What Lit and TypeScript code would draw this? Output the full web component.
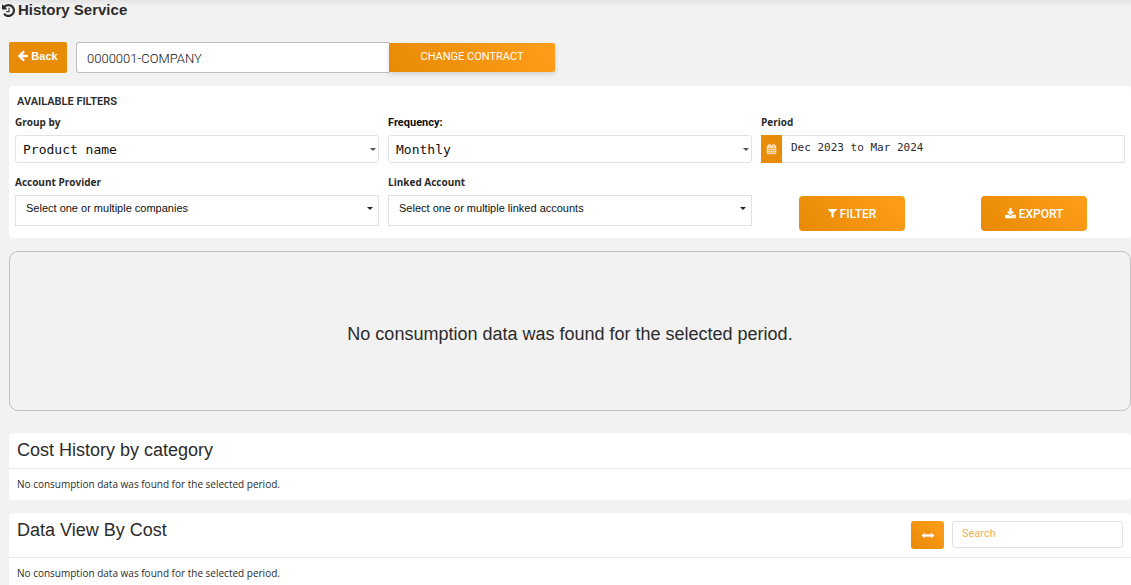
import { LitElement, html, css, svg } from "lit";
import { customElement, property } from "lit/decorators.js";

const icons = {
  history: { box: "0 0 1536 1536", d: "M1536 768q0 156-61 298t-164 245-245 164-298 61q-172 0-327-72.500t-264-204.500q-7-10-6.500-22.500t8.500-20.500l137-138q10-9 25-9 16 2 23 12 73 95 179 147t225 52q104 0 198.500-40.500t163.500-109.500 109.500-163.500 40.500-198.500-40.500-198.500-109.500-163.500-163.500-109.500-198.500-40.500q-98 0-188 35.500t-160 101.500l137 138q31 30 14 69-17 40-59 40h-448q-26 0-45-19t-19-45v-448q0-42 40-59 39-17 69 14l130 129q107-101 244.500-156.500t284.500-55.500q156 0 298 61t245 164 164 245 61 298zM896 480v448q0 14-9 23t-23 9h-320q-14 0-23-9t-9-23v-64q0-14 9-23t23-9h224v-352q0-14 9-23t23-9h64q14 0 23 9t9 23z" },
  back: { box: "0 0 1472 1408", d: "M1472 640v128q0 53-32.500 90.500t-84.500 37.500h-704l293 294q38 36 38 90t-38 90l-75 76q-37 37-90 37-52 0-91-37l-651-652q-37-37-37-90 0-52 37-91l651-650q38-38 91-38 52 0 90 38l75 74q38 38 38 91t-38 91l-293 293h704q52 0 84.500 37.500t32.500 90.500z" },
  filter: { box: "0 0 1410 1408", d: "M1404 39q17 41-14 70l-493 493v742q0 42-39 59-13 5-25 5-27 0-45-19l-256-256q-19-19-19-45v-486l-493-493q-31-29-14-70 17-39 59-39h1280q42 0 59 39z" },
  download: { box: "0 0 1664 1536", d: "M1280 1216q0-26-19-45t-45-19-45 19-19 45 19 45 45 19 45-19 19-45zM1536 1216q0-26-19-45t-45-19-45 19-19 45 19 45 45 19 45-19 19-45zM1664 992v320q0 40-28 68t-68 28h-1472q-40 0-68-28t-28-68v-320q0-40 28-68t68-28h465l135 136q58 56 136 56t136-56l136-136h464q40 0 68 28t28 68zM1339 423q17 41-14 70l-448 448q-18 19-45 19t-45-19l-448-448q-31-29-14-70 17-39 59-39h256v-448q0-26 19-45t45-19h256q26 0 45 19t19 45v448h256q42 0 59 39z" },
  calendar: { box: "0 0 1664 1792", d: "M128 1664h288v-288h-288v288zM480 1664h320v-288h-320v288zM128 1312h288v-320h-288v320zM480 1312h320v-320h-320v320zM128 928h288v-288h-288v288zM864 1664h320v-288h-320v288zM480 928h320v-288h-320v288zM1248 1664h288v-288h-288v288zM864 1312h320v-320h-320v320zM512 448v-288q0-13-9.500-22.500t-22.500-9.500h-64q-13 0-22.500 9.500t-9.500 22.500v288q0 13 9.500 22.500t22.500 9.500h64q13 0 22.500-9.500t9.500-22.500zM1248 1312h288v-320h-288v320zM864 928h320v-288h-320v288zM1248 928h288v-288h-288v288zM1280 448v-288q0-13-9.500-22.500t-22.500-9.500h-64q-13 0-22.500 9.500t-9.500 22.500v288q0 13 9.500 22.500t22.500 9.500h64q13 0 22.500-9.500t9.500-22.500zM1664 384v1280q0 52-38 90t-90 38h-1408q-52 0-90-38t-38-90v-1280q0-52 38-90t90-38h128v-96q0-66 47-113t113-47h64q66 0 113 47t47 113v96h384v-96q0-66 47-113t113-47h64q66 0 113 47t47 113v96h128q52 0 90 38t38 90z" },
  resize: { box: "0 0 1792 768", d: "M1792 384q0 26-19 45l-256 256q-19 19-45 19t-45-19-19-45v-128h-1024v128q0 26-19 45t-45 19-45-19l-256-256q-19-19-19-45t19-45l256-256q19-19 45-19t45 19 19 45v128h1024v-128q0-26 19-45t45-19 45 19l256 256q19 19 19 45z" },
};

@customElement("app-icon")
class AppIcon extends LitElement {
  static styles = css`
    :host { display: inline-flex; flex: none; }
    .glyph { width: 100%; height: 100%; fill: currentColor; stroke: currentColor; overflow: visible; }
    .thin { stroke-width: 0; }
    .thick { stroke-width: 110; }
  `;
  @property() name: keyof typeof icons = "history";
  render() {
    const icon = icons[this.name];
    const heavy = this.name === "resize" || this.name === "calendar";
    return html`<svg class="glyph ${heavy ? "thick" : "thin"}" viewBox=${icon.box} aria-hidden="true">${svg`<path d=${icon.d}></path>`}</svg>`;
  }
}

@customElement("app-root")
class AppRoot extends LitElement {
  static styles = css`
    :host {
      display: block;
      min-height: 100vh;
      box-sizing: border-box;
      padding-left: 9px;
      background: linear-gradient(#e4e4e4, #f2f2f2 6px) no-repeat #f2f2f2;
      color: #2b2b2b;
      font: 10px/16px "Liberation Sans", Arial, sans-serif;
      overflow: hidden;
    }
    *, *::before { box-sizing: border-box; }
    button, input, select { font: inherit; color: inherit; margin: 0; }
    h1, h2, p { margin: 0; font-weight: 400; }

    .title {
      display: flex;
      align-items: center;
      gap: 3px;
      margin-left: -7px;
      height: 20px;
      font-size: 15px;
      font-weight: 700;
    }
    .title-icon { width: 13px; height: 13px; }

    .toolbar { display: flex; align-items: center; margin: 22px 0 13px; }
    .back {
      display: flex;
      align-items: center;
      justify-content: center;
      gap: 3px;
      width: 58px;
      height: 31px;
      margin-right: 9px;
      padding: 0 0 3px;
      border: 0;
      border-radius: 2px;
      background: #e88b07;
      color: #fff;
      font-size: 11px;
      font-weight: 700;
      text-decoration: none;
    }
    .back-icon { width: 10px; height: 10px; }
    .contract {
      width: 313px;
      height: 31px;
      padding: 2px 10px 0;
      border: 1px solid #bfbfbf;
      border-right: 0;
      border-radius: 3px 0 0 3px;
      background: #fff;
      font: 300 13px Roboto, sans-serif;
      color: #111;
    }
    .orange {
      display: flex;
      align-items: center;
      justify-content: center;
      border: 0;
      background: linear-gradient(45deg, #e88a05, #ff9e1b);
      color: #fff;
    }
    .change {
      width: 166px;
      height: 29px;
      padding: 0 0 2px;
      border-radius: 0 2px 2px 0;
      font: 11px Roboto, sans-serif;
      box-shadow: 0 2px 5px rgb(0 0 0 / 14%);
    }

    .card { border-radius: 4px; background: #fff; }
    .filters { padding: 8px 6px 7px; }
    .legend { padding-left: 2px; font: 600 11px/16px Roboto, sans-serif; }
    .grid {
      display: grid;
      grid-template-columns: repeat(3, minmax(0, 1fr));
      column-gap: 9px;
      row-gap: 11px;
      padding-top: 4px;
    }
    .field { display: flex; flex-direction: column; }
    .label { margin-bottom: 4px; font: 700 10px/17px "Open Sans", sans-serif; }
    .label-plain { font: 700 11px/17px Roboto, sans-serif; color: #111; }
    .picker { display: grid; align-items: center; }
    .picker > * { grid-area: 1 / 1; }
    .caret {
      justify-self: end;
      margin-right: 3px;
      border: 3px solid transparent;
      border-top-color: #555;
      border-bottom: 0;
      pointer-events: none;
    }
    .caret-dark { margin: 0 6px 4px 0; border-top-color: #222; }
    .select {
      width: 100%;
      height: 28px;
      padding: 0 7px;
      appearance: none;
      border: 1px solid #e2e2e2;
      border-radius: 3px;
      background: #fff;
      font: 13px "DejaVu Sans Mono", monospace;
      color: #111;
    }
    .multi {
      height: 31px;
      padding: 0 10px 6px;
      border-radius: 0;
      font: 11px "Liberation Sans", Arial, sans-serif;
    }
    .period { display: flex; }
    .calendar {
      display: flex;
      align-items: center;
      justify-content: center;
      width: 21px;
      height: 28px;
      background: #e88b07;
      color: #fbe3c3;
    }
    .calendar-icon { width: 9px; height: 10px; }
    .date {
      flex: 1;
      min-width: 0;
      height: 28px;
      padding: 0 9px 4px;
      border: 1px solid #e2e2e2;
      border-left: 0;
      border-radius: 0;
      font: 11px "DejaVu Sans Mono", monospace;
    }
    .actions {
      display: grid;
      grid-template-columns: 1fr 1fr;
      justify-items: center;
      height: 35px;
      margin-top: 22px;
    }
    .action {
      gap: 3px;
      width: 106px;
      height: 35px;
      border-radius: 4px;
      font: 500 12px Roboto, sans-serif;
    }
    .filter-icon { width: 9px; height: 9px; }
    .download-icon { width: 11px; height: 10px; }

    .empty {
      display: flex;
      align-items: center;
      justify-content: center;
      min-height: 160px;
      margin: 13px 0 22px;
      padding: 12px 12px 6px;
      border: 1px solid #c0c0c0;
      border-radius: 9px;
      font-size: 18px;
      line-height: 24px;
    }
    .head {
      display: flex;
      gap: 8px;
      padding: 5px 8px 6px;
      border-bottom: 1px solid #e8e8e8;
    }
    .heading { flex: 1; font-size: 18px; line-height: 24px; }
    .note { padding: 7px 8px 8px; font: 10px/16px "Open Sans", sans-serif; }
    .data { margin-top: 13px; }
    .head-tools { padding: 8px 8px 8px; }
    .head-tools .heading { line-height: 18px; }
    .resize { width: 33px; height: 28px; padding: 0; border-radius: 3px; }
    .resize-icon { width: 12px; height: 5px; }
    .search {
      width: 171px;
      height: 27px;
      padding: 0 9px 2px;
      border: 1px solid #e2e2e2;
      border-radius: 3px;
      font: 11px Roboto, sans-serif;
    }
    .search::placeholder { color: #f0b05a; opacity: 1; }
  `;

  render() {
    const message = "No consumption data was found for the selected period.";
    return html`
      <h1 class="title"><app-icon class="title-icon" name="history"></app-icon>History Service</h1>
      <div class="toolbar">
        <a class="back" href="#"><app-icon class="back-icon" name="back"></app-icon>Back</a>
        <input class="contract" aria-label="Contract" .value=${"0000001-COMPANY"} />
        <button class="orange change">CHANGE CONTRACT</button>
      </div>

      <form class="card filters" @submit=${(e: Event) => e.preventDefault()}>
        <h2 class="legend">AVAILABLE FILTERS</h2>
        <div class="grid">
          <div class="field">
            <label class="label" for="group">Group by</label>
            <div class="picker">
              <select class="select" id="group"><option>Product name</option></select>
              <span class="caret"></span>
            </div>
          </div>
          <div class="field">
            <label class="label label-plain" for="frequency">Frequency:</label>
            <div class="picker">
              <select class="select" id="frequency"><option>Monthly</option></select>
              <span class="caret"></span>
            </div>
          </div>
          <div class="field">
            <label class="label" for="period">Period</label>
            <div class="period">
              <span class="calendar"><app-icon class="calendar-icon" name="calendar"></app-icon></span>
              <input class="date" id="period" .value=${"Dec 2023 to Mar 2024"} />
            </div>
          </div>
          <div class="field">
            <label class="label" for="provider">Account Provider</label>
            <div class="picker">
              <select class="select multi" id="provider"><option>Select one or multiple companies</option></select>
              <span class="caret caret-dark"></span>
            </div>
          </div>
          <div class="field">
            <label class="label" for="linked">Linked Account</label>
            <div class="picker">
              <select class="select multi" id="linked"><option>Select one or multiple linked accounts</option></select>
              <span class="caret caret-dark"></span>
            </div>
          </div>
          <div class="actions">
            <button class="orange action"><app-icon class="filter-icon" name="filter"></app-icon>FILTER</button>
            <button class="orange action" type="button"><app-icon class="download-icon" name="download"></app-icon>EXPORT</button>
          </div>
        </div>
      </form>

      <p class="empty">${message}</p>

      <section class="card">
        <div class="head"><h2 class="heading">Cost History by category</h2></div>
        <p class="note">${message}</p>
      </section>

      <section class="card data">
        <div class="head head-tools">
          <h2 class="heading">Data View By Cost</h2>
          <button class="orange resize" aria-label="Expand table"><app-icon class="resize-icon" name="resize"></app-icon></button>
          <input class="search" type="search" placeholder="Search" aria-label="Search" />
        </div>
        <p class="note">${message}</p>
      </section>
    `;
  }
}
